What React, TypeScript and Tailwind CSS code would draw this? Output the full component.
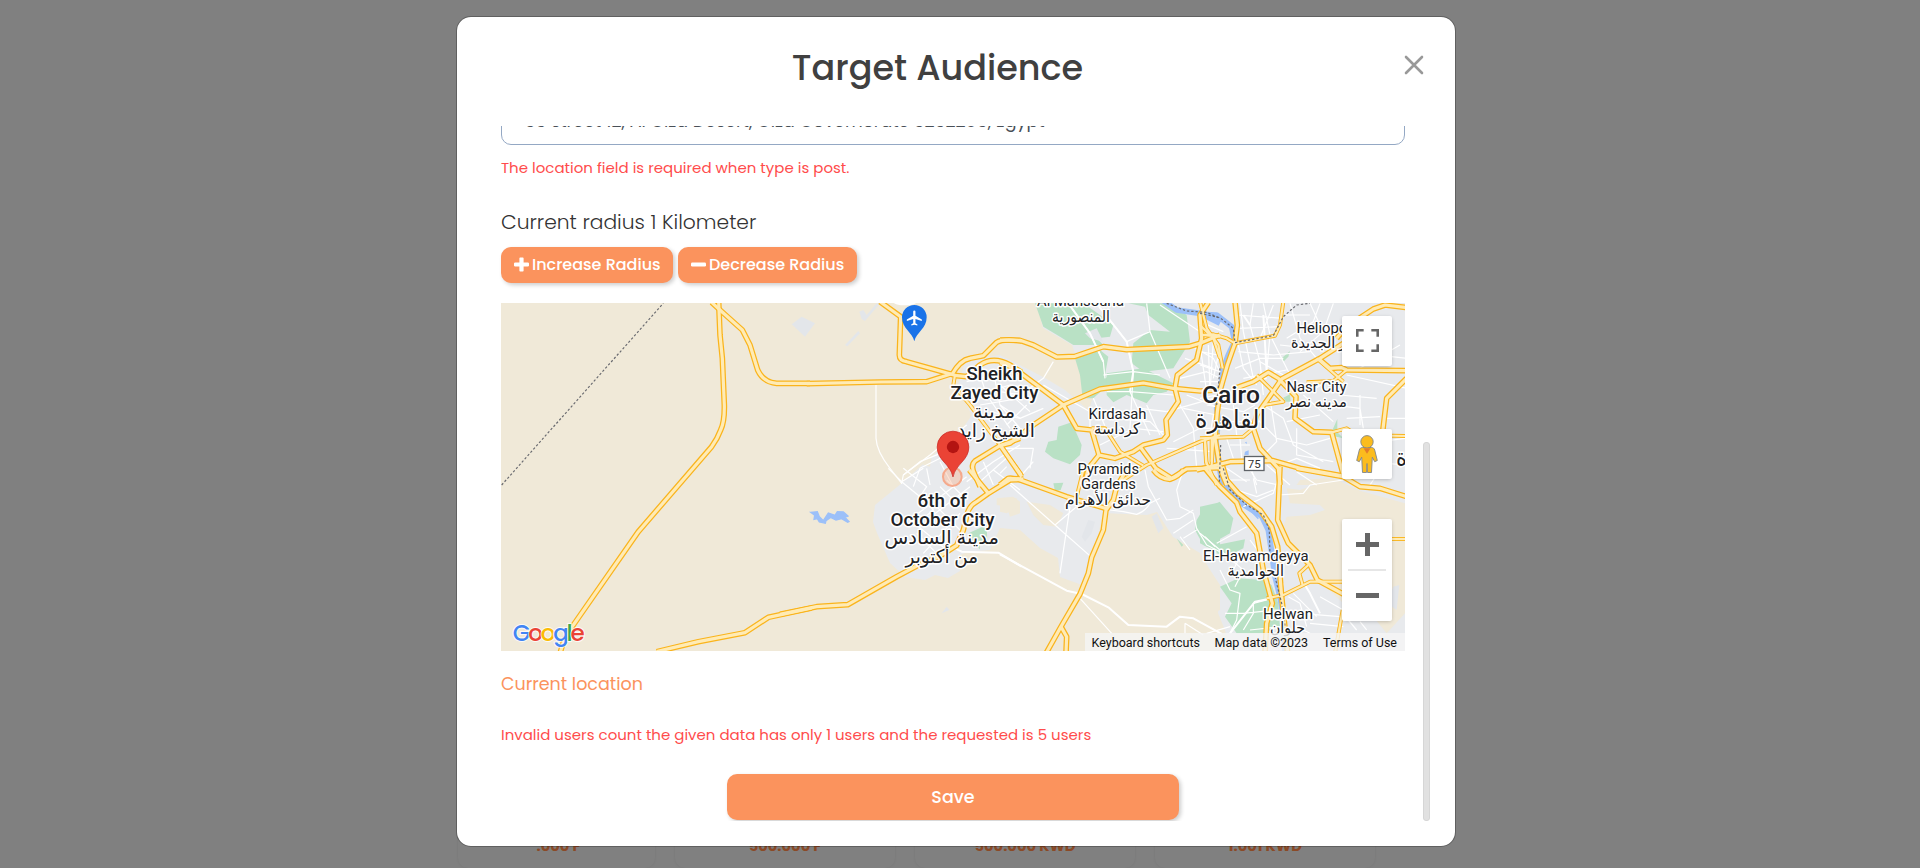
import React from "react";

/* Map geometry is authored per tile, three drawing units to one pixel. */
type Tile = "W" | "A" | "B" | "C" | "D" | "E" | "F";
type Shape = [Tile, string];

const ORIGIN: Record<Tile, string> = {
  W: "translate(490 295) scale(.33333)",
  A: "translate(780 295) scale(.33333)",
  B: "translate(1000 295) scale(.33333)",
  C: "translate(1200 295) scale(.33333)",
  D: "translate(780 470) scale(.33333)",
  E: "translate(1000 470) scale(.33333)",
  F: "translate(1200 470) scale(.33333)",
};

const SAND: Shape[] = [
  ["F", "M260 55 300 60 400 25 480 62 615 100 615 430 560 490 520 440 430 400 345 320 330 285 275 235 250 170 260 140 330 135 375 120 360 105 270 100Z"],
  ["F", "M0 285 30 300 60 345 60 420 40 430 0 425Z"],
  ["B", "M180 260 220 265 275 310 270 335 230 300Z"],
  ["A", "M430 490 455 490 450 515 430 510Z"],
  ["D", "M650 85 700 80 720 95 720 130 690 140 680 110 650 105Z"],
  ["E", "M0 90 50 85 55 110 20 130 0 125Z"],
  ["E", "M80 95 150 105 190 130 170 170 130 165 100 135Z"],
  ["C", "M300 555 380 550 425 560 425 570 290 570Z"],
];

const PARKS: Shape[] = [
  ["B", "M105 25 250 25 300 60 340 90 330 125 290 130 310 150 220 150 180 125 130 95Z"],
  ["B", "M385 25 505 25 560 60 570 140 520 220 430 230 395 205 400 145 450 105 510 110 445 60 435 35Z"],
  ["B", "M225 190 300 165 325 185 315 240 330 265 280 310 248 310 240 240Z"],
  ["B", "M320 235 430 220 520 265 500 290 460 300 440 325 380 300 340 322 320 300Z"],
  ["B", "M175 395 215 382 245 450 240 480 210 508 160 490 135 470 145 440 170 435Z"],
  ["E", "M160 40 190 38 182 60 165 64Z"],
  ["E", "M605 125 660 95 660 250 610 225 585 180 590 150Z"],
  ["F", "M0 110 60 97 100 145 90 190 45 215 20 230 0 220Z"],
  ["F", "M50 225 135 208 130 235 80 260 50 250Z"],
  ["F", "M60 350 115 325 190 330 215 345 235 400 240 470 190 490 110 490 75 440 95 400Z"],
  ["D", "M565 190 620 165 622 215 600 225 600 238 570 215Z"],
  ["C", "M245 190 270 168 265 185 250 200Z"],
  ["C", "M395 410 412 372 412 412 430 430 395 422Z"],
  ["C", "M250 308 270 298 272 320 258 320Z"],
  ["E", "M530 205 550 225 545 230Z"],
];

const GREY: Shape[] = [
  ["A", "M35 88 65 65 105 85 75 125Z"],
  ["A", "M238 50 250 45 260 60 290 25 300 25 255 78 245 72Z"],
  ["A", "M195 150 235 108 240 115 202 154Z"],
  ["B", "M255 115 290 100 310 140 270 130Z"],
  ["D", "M485 430 500 410 508 420Z"],
  ["E", "M245 200 265 150 285 155 275 190 255 215Z"],
  ["E", "M455 140 470 130 490 175 475 190Z"],
  ["F", "M580 350 598 345 590 420 560 400Z"],
];

const RIVER: Shape[] = [
  ["B", "M480 10 530 45 600 55 660 85"],
  ["C", "M0 58 50 60 95 95 104 140 85 180 70 220 62 290 50 340 55 380 48 440 55 500 68 570"],
  ["F", "M60 -10 85 60 125 100 185 138 205 180 214 240 225 320 240 380 252 450 255 543"],
];

const HIGHWAYS: Shape[] = [
  ["W", "M665 22 690 45 757 105 780 150 803 225Q820 262 860 265L960 265"],
  ["A", "M80 266 300 261 440 260 515 236"],
  ["W", "M686 20 690 120 697 190 703 330Q704 380 692 405 682 432 665 455L445 710 250 990 222 1035 210 1075"],
  ["W", "M500 1070 625 1040 765 1013 835 967 965 939"],
  ["D", "M0 433 110 410 203 404 350 320 410 288 480 258 530 226 550 180 562 130Q570 105 590 95L625 70 690 30 725 28"],
  ["A", "M300 20 362 65 358 180Q358 197 380 200L450 220 530 242 560 245"],
  ["A", "M515 240Q540 195 570 190L610 182 650 142Q670 130 725 138"],
  ["A", "M560 245 600 210Q640 182 690 210L725 232"],
  ["B", "M0 135 60 136 100 150 170 186 225 184 310 155 380 164 565 155 600 145 660 120"],
  ["B", "M0 203 40 218 110 270 190 330 230 400 275 405 297 480 345 490 400 470 430 450 490 435 502 420 498 375 535 320 525 280 532 240 590 195 605 130 600 60 625 22"],
  ["B", "M190 330 300 282 430 264 520 280 600 288 660 285"],
  ["B", "M190 330 100 390 30 445 0 452"],
  ["A", "M720 430 660 452 585 498Q570 512 585 540L600 575"],
  ["D", "M568 0 625 70"],
  ["B", "M297 480 265 520 255 560"],
  ["B", "M420 455 468 520 515 550 560 522 665 518"],
  ["C", "M-10 525 90 500 220 497 300 520 430 543"],
  ["E", "M460 0Q480 27 510 28 535 20 550 0"],
  ["E", "M380 0 350 50 340 90 318 120 310 180 275 262 265 310 240 372 183 470 138 550"],
  ["E", "M183 470 200 500 198 550"],
  ["E", "M0 45 30 25 55 28 200 80 320 116"],
  ["B", "M0 450 65 545M0 570 25 550 70 552"],
  ["F", "M15 -5 60 50 110 98 120 125 170 190 190 300 217 400 200 460 195 550"],
  ["F", "M240 -10 233 150 265 220 330 285 352 330 435 375"],
  ["F", "M68 -10 80 30 115 70 180 120 215 170 233 230 245 380 263 550"],
  ["F", "M290 -5 430 20 480 50 540 55 620 80"],
  ["C", "M105 20 112 90 105 145 82 210 62 280 52 350 45 430 60 520 80 570"],
  ["C", "M430 145 360 190 245 252 205 310 170 360 160 400"],
  ["C", "M355 190 390 220 425 218 440 225 620 227"],
  ["C", "M410 130 440 95 520 42 555 30 620 38"],
  ["C", "M620 250 560 310 548 410"],
  ["C", "M110 278 160 260 205 232 235 250 288 305 285 370 340 410 395 412 430 540"],
  ["C", "M160 400 180 460 235 520 240 570"],
];

const ARTERIALS: Shape[] = [
  ["C", "M250 20 240 90 225 122 105 145"],
  ["C", "M0 20 20 100 55 150 68 220"],
  ["C", "M0 120 40 118 80 130 105 145"],
  ["C", "M0 430 130 425 160 400"],
  ["C", "M15 430 18 500 50 570M35 430 35 500"],
  ["C", "M440 225 400 258 320 262"],
  ["C", "M395 412 440 400 470 420 620 423"],
  ["C", "M170 240 250 320 190 330"],
  ["C", "M350 190 430 260"],
  ["B", "M275 400 315 400 360 470 430 512"],
  ["B", "M345 570 440 510 600 440 660 420"],
  ["B", "M605 120 660 125M600 90 640 130 660 190M615 440 620 510M640 430 635 510"],
  ["A", "M525 240 520 270 570 330 660 450 725 540"],
  ["F", "M200 385 250 375 330 335 435 335"],
  ["F", "M325 285 298 310 308 345"],
  ["F", "M570 207 620 207"],
  ["F", "M428 420 405 550"],
  ["E", "M250 0 230 80"],
];

const STREETS: Shape[] = [
  ["A", "M288 270 288 430Q290 470 330 520L365 565 370 540 450 480 560 390"],
  ["A", "M370 540 420 500 570 440M400 575 420 520 500 480M560 560 640 500 720 450M450 570 440 520M600 560 690 480M610 500 640 570M520 575 480 500"],
  ["A", "M560 260 640 240 720 250M590 300 690 270 720 275M600 330 720 310M630 350 720 370M640 230 660 330 720 400M600 240 620 300 690 400"],
  ["B", "M0 290 60 300 130 250 160 200M0 330 60 370 130 340M20 390 80 330M0 270 90 350M130 270 270 350 270 400"],
  ["B", "M205 25 270 115 310 200 315 250M290 25 380 140 400 230 390 400M380 140 450 110 440 25M450 110 510 250M480 30 600 110"],
  ["B", "M310 240 400 230 480 240M320 290 390 290 520 300M280 310 330 430M390 290 450 420M440 330 480 420"],
  ["B", "M340 370 450 380 500 430M400 400 490 410M420 340 500 350M540 330 580 400 590 520M520 440 600 400 660 400"],
  ["B", "M540 250 620 230 660 250M555 190 640 220M570 150 640 190 660 230M560 300 660 340M550 340 650 360M600 150 620 290M640 140 630 290"],
  ["B", "M300 450 420 390M500 350 640 310M500 460 640 470M0 460 100 460 90 520M65 540 100 500"],
  ["C", "M120 25 130 110 160 250M160 25 150 90 180 200 250 240M190 25 210 120 200 230M220 30 180 130M110 60 250 70M115 100 240 95"],
  ["C", "M270 25 300 130 350 190M330 25 360 90 420 130M360 25 340 80 260 130M400 25 370 110 300 170M250 60 330 60M240 150 330 160"],
  ["C", "M115 170 220 180 330 170M105 220 180 190 250 190M130 250 260 225M115 150 130 220 170 270M180 200 190 300M215 130 270 240"],
  ["C", "M0 80 70 110M0 170 55 180 40 250M0 210 60 230M0 260 55 260M20 120 0 170M25 150 30 290M0 310 50 300"],
  ["C", "M190 330 250 370 280 450 370 500M170 370 230 430 320 450 390 430M210 310 230 440 190 480M260 380 360 360M290 400 290 480 400 500"],
  ["C", "M400 330 480 340 490 400M420 300 530 310M440 370 540 365M480 300 480 390M560 370 615 370M540 440 615 430M310 300 400 380M330 290 380 260"],
  ["C", "M80 430 100 490M90 450 150 450M120 430 125 490M60 380 180 380M100 330 110 420M80 520 140 560M150 510 170 570M200 510 270 570"],
  ["C", "M20 330 130 350 165 330M40 360 30 420M290 530 350 570M240 510 290 490 360 520M440 240 620 280M470 225 600 150M440 170 620 190"],
  ["D", "M325 -5 365 35 420 80 440 50 370 -5M365 35 430 -5M415 130 560 20M380 140 500 240M440 150 570 50M460 100 540 180M400 170 460 120 420 80M430 250 540 130M500 30 560 90"],
  ["D", "M410 190 470 250M480 50 530 100M640 0 720 60M660 10 680 -10"],
  ["E", "M30 45 165 165 275 262M165 165 230 110M210 110 180 310M330 120 370 125 410 133Q435 125 450 100L480 85M240 385 335 490M555 460 555 490M555 460 610 495"],
  ["E", "M435 0 445 50 500 150 540 145 580 120M550 0 530 60 540 110 580 130 590 175 620 225 660 245M520 190 580 150M540 200 570 240M550 205 590 180"],
  ["F", "M0 190 60 240 130 300 105 350M130 110 220 70 235 20M110 60 170 80 220 60M160 25 170 70M90 30 150 30M235 75 310 70 330 45 430 30M150 0 170 30 235 45"],
  ["F", "M50 220 140 170M15 200 45 230M60 300 90 360 120 370 110 450 90 490M130 480 160 430 160 400 200 390M75 430 130 430 230 420M100 300 130 240M240 400 290 470 330 490"],
  ["F", "M250 340 240 380M265 380 300 400 320 470M280 370 350 440M300 430 420 440M330 460 430 470M360 380 430 420M445 450 470 480M480 455 500 480M150 210 180 250M270 250 230 310"],
  ["F", "M430 0 560 -20 615 -15M500 60 540 0M150 480 240 470M20 490 90 470"],
];

const MAIN_STREETS: Shape[] = [
  ["D", "M525 235 545 245 655 248 725 290"],
  ["E", "M0 253 200 362 245 372 325 412 385 465 500 470 540 440 580 445 665 492"],
  ["B", "M205 25 270 115 310 200M290 25 380 140 400 230 390 290"],
  ["F", "M300 320 330 370 360 430M90 490 165 395 215 385"],
  ["C", "M150 90 130 60M160 250 200 250M190 60 200 230"],
];

const DASHES: Shape[] = [
  ["W", "M35 570 520 25"],
  ["B", "M500 25 560 48 620 52 660 70"],
  ["C", "M0 55 60 68 100 100 105 143 220 122 250 65 290 30 330 25"],
  ["C", "M60 220 50 330M62 450 58 560"],
  ["F", "M70 -5 90 60 140 105 190 135 208 180 210 260M225 320 245 400 260 500"],
];

const draw = (list: Shape[]) =>
  list.map(([tile, d], i) => <path key={i} d={d} transform={ORIGIN[tile]} />);

type Label = [string, number, number, number, number, number?];
/* text, left, right, baseline, size, weight */
const LABELS: Label[] = [
  ["Al Mansouria", 1037, 1124, 306, 15],
  ["المنصورية", 1052, 1110, 321.5, 15.5],
  ["Sheikh", 966.5, 1022.5, 380, 18, 500],
  ["Zayed City", 950.5, 1038.5, 399, 18, 500],
  ["مدينة", 973, 1015, 417.5, 19],
  ["الشيخ زايد", 957, 1035, 436.5, 19],
  ["Kirdasah", 1088.5, 1146.5, 419, 15],
  ["كرداسة", 1094, 1140, 433.5, 15.5],
  ["Pyramids", 1077.5, 1139, 474, 15],
  ["Gardens", 1081, 1136, 489, 15],
  ["حدائق الأهرام", 1065, 1151, 504.5, 15.5],
  ["Heliopolis", 1296.5, 1362, 333, 15],
  ["مصر الجديدة", 1291, 1367, 348, 15.5],
  ["Nasr City", 1286.5, 1346.5, 392, 15],
  ["مدينه نصر", 1286, 1347, 406.5, 15.5],
  ["Cairo", 1202, 1260, 403, 24, 500],
  ["القاهرة", 1195, 1266, 427.5, 25],
  ["6th of", 917.5, 967, 506.5, 18, 500],
  ["October City", 890.5, 994.5, 525.5, 18, 500],
  ["مدينة السادس", 884.5, 999, 544, 19],
  ["من أكتوبر", 905.5, 978, 563, 19],
  ["El-Hawamdeyya", 1203, 1308.5, 561, 15],
  ["الحوامدية", 1227.5, 1284, 575.5, 15.5],
  ["Helwan", 1263, 1313, 619, 15],
  ["حلوان", 1270, 1305, 633, 15.5],
  ["ة", 1396, 1407, 466, 24, 500],
];

function MapCanvas() {
  return (
    <svg
      viewBox="501 303 904 348"
      className="block h-[348px] w-[904px] bg-[#f0e9d8]"
      fontFamily='Roboto, "DejaVu Sans", sans-serif'
    >
      <path
        fill="#e8eaed"
        d="M902 483 875 505 873 522 877 533 890 563 905 577 925 580 935 575 948 578 960 571 958 556 967 552 990 550 1000 528 1020 530 1040 548 1058 558 1060 577 1082 585 1098 535 1103 513 1147 515 1157 512 1173 537 1200 553 1213 575 1220 590 1218 613 1225 630 1230 651 1405 651 1405 303 1037 303 1043 328 1072 345 1080 368 1093 398 1088 410 1065 390 1045 378 1020 365 1000 355 987 357 965 363 957 388 972 415 960 432 930 458Z"
      />
      <g fill="#f0e9d8">{draw(SAND)}</g>
      <g fill="#b9e1c5">{draw(PARKS)}</g>
      <g fill="#e3e6ea">{draw(GREY)}</g>
      <path
        transform={ORIGIN.D}
        fill="#9cc0f9"
        stroke="#9cc0f9"
        strokeWidth="4"
        d="M92 127 112 125 118 140 130 152 145 129 165 136 172 125 190 126 204 138 195 142 207 155 203 157 185 146 168 150 152 142 138 152 136 160 118 156 112 146 102 148 104 136Z"
      />
      <path transform={ORIGIN.C} fill="#9cc0f9" d="M135 470 146 466 146 480 133 480Z M135 442 140 440 140 448Z" />
      <g fill="none" strokeLinejoin="round">
        <g stroke="#9cc0f9" strokeWidth="17">{draw(RIVER)}</g>
        <path transform={ORIGIN.F} stroke="#9cc0f9" strokeWidth="4" d="M120 95 150 120 175 146" />
        <g stroke="#fff" strokeWidth="3.6">{draw(STREETS)}</g>
        <g stroke="#fff" strokeWidth="6">{draw(MAIN_STREETS)}</g>
        <g stroke="#fab41c" strokeWidth="12">{draw(ARTERIALS)}</g>
        <g stroke="#fab41c" strokeWidth="17">{draw(HIGHWAYS)}</g>
        <g stroke="#ffebb5" strokeWidth="6.5">{draw(ARTERIALS)}</g>
        <g stroke="#ffebb5" strokeWidth="9.5">{draw(HIGHWAYS)}</g>
        <g stroke="#6a6b70" strokeWidth="3.6" strokeDasharray="7 6">{draw(DASHES)}</g>
      </g>

      <g transform={ORIGIN.A}>
        <ellipse cx="375" cy="22" rx="34" ry="9" fill="#fff" />
        <path
          d="M403 139C397 112 366 101 366 67a37 37 0 0 1 74 0C440 101 409 112 403 139Z"
          fill="#1a73e8"
        />
        <path
          transform="translate(376 42) scale(2.25)"
          fill="#fff"
          d="M22 16v-2l-8.500-5V3.500a1.500 1.500 0 0 0-3 0V9L2 14v2l8.500-2.500V19L8 20.500V22l4-1 4 1v-1.500L13.500 19v-5.500z"
        />
      </g>

      <rect x="1244.500" y="456.500" width="19.500" height="14" fill="#fff" stroke="#5f6368" strokeWidth="1.300" />
      <text x="1254.300" y="468" fontSize="11.500" fill="#333" textAnchor="middle">75</text>

      <g fill="#202124" stroke="#fff" strokeWidth="3" strokeLinejoin="round" paintOrder="stroke">
        {LABELS.map(([text, left, right, y, size, weight]) => (
          <text
            key={text}
            x={(left + right) / 2}
            y={y}
            fontSize={size}
            fontWeight={weight ?? 400}
            textAnchor="middle"
            textLength={right - left}
            lengthAdjust="spacingAndGlyphs"
          >
            {text}
          </text>
        ))}
      </g>

      <g transform={ORIGIN.A}>
        <circle cx="517" cy="545" r="28" fill="#fb935d" fillOpacity=".28" stroke="#f5a98c" strokeWidth="6" />
        <path
          d="M519 546C510 505 471.500 497 471.500 456a47.500 47.500 0 0 1 95 0C566.500 497 528 505 519 546Z"
          fill="#ea4335"
          stroke="#c5221f"
          strokeWidth="2"
        />
        <circle cx="519" cy="456" r="18.500" fill="#b31412" />
      </g>

      <text
        x="512.800"
        y="640.800"
        fontSize="23"
        fontWeight="500"
        letterSpacing="-2.250"
        fontFamily="Poppins, Lato, sans-serif"
        stroke="#fff"
        strokeWidth="2"
        strokeOpacity=".8"
        paintOrder="stroke"
      >
        <tspan fill="#4285f4">G</tspan>
        <tspan fill="#ea4335">o</tspan>
        <tspan fill="#fbbc04">o</tspan>
        <tspan fill="#4285f4">g</tspan>
        <tspan fill="#34a853">l</tspan>
        <tspan fill="#ea4335">e</tspan>
      </text>
    </svg>
  );
}

const CONTROL = "flex items-center justify-center rounded-[2px] bg-white shadow-[0_1px_4px_-1px_rgba(0,0,0,0.3)]";

function MapControls() {
  return (
    <>
      <button className={`absolute right-[13px] top-[13px] h-[50px] w-[50px] ${CONTROL}`}>
        <svg viewBox="0 0 18 18" className="mb-px h-[23px] w-[23px]" fill="#666">
          <path d="M0 0v6h2V2h4V0H0zm16 0h-4v2h4v4h2V0h-2zm0 16h-4v2h6v-6h-2v4zM2 12H0v6h6v-2H2v-4z" />
        </svg>
      </button>
      <button className={`absolute right-[13px] top-[126px] h-[50px] w-[50px] ${CONTROL}`}>
        <svg viewBox="0 0 22 38" className="h-[38px] w-[22px]" stroke="#80868b" strokeWidth=".9" strokeLinejoin="round">
          <path
            fill="#fbbc1e"
            d="M6.500 12.500h9c1.700 0 2.800 1 3.200 2.500l2.600 10.500-2.600 1.200-2.400-4.500-.8 15.300h-4l-.5-9-.5 9h-4l-.8-15.300-2.400 4.500L.7 25.500 3.300 15c.4-1.500 1.500-2.500 3.200-2.500z"
          />
          <circle cx="11" cy="6.800" r="6.200" fill="#fbbc1e" />
          <path stroke="none" fill="#e37d2b" d="M7.500 13.200h7L11 18.800z" />
        </svg>
      </button>
      <div className="absolute right-[13px] top-[216px] flex h-[102px] w-[50px] flex-col items-center rounded-[2px] bg-white shadow-[0_1px_4px_-1px_rgba(0,0,0,0.3)]">
        <button className="flex h-[50px] items-center">
          <svg viewBox="0 0 23 23" className="h-[23px] w-[23px]" fill="#666">
            <path d="M9 0h5v9h9v5h-9v9H9v-9H0V9h9z" />
          </svg>
        </button>
        <div className="h-[2px] w-[38px] bg-[#e6e6e6]" />
        <button className="flex h-[49px] items-center">
          <svg viewBox="0 0 23 5" className="h-[5px] w-[23px]" fill="#666">
            <path d="M0 0h23v5H0z" />
          </svg>
        </button>
      </div>
      <div className="absolute bottom-0 right-0 flex h-[18px] w-[320px] items-center whitespace-nowrap bg-[#f5f5f5]/80 pl-[6.5px] pt-px font-['Roboto',sans-serif] text-[12.5px] leading-[17px] text-[#111]">
        <span className="w-[123px]">Keyboard shortcuts</span>
        <span className="w-[108.5px]">Map data ©2023</span>
        <span>Terms of Use</span>
      </div>
    </>
  );
}

const BUTTON =
  "flex items-center bg-[#fb935d] font-medium text-white shadow-[2px_2px_4px_rgba(0,0,0,0.2)]";

export default function App() {
  return (
    <div className="relative h-[868px] w-full overflow-hidden bg-[#808080] font-['Poppins','Inter',sans-serif]">
      <div className="flex h-full items-end gap-5 pl-[458px] text-[14.7px] font-bold text-[#8b4a27]">
        {[
          [".000 F", "w-[197px] pl-1"],
          ["500.000 F", "w-[220px]"],
          ["500.000 KWD", "w-[220px]"],
          ["1.001 KWD", "w-[220px]"],
        ].map(([price, size]) => (
          <div
            key={price}
            className={`flex h-[50px] items-end justify-center rounded-b-[10px] pb-[12px] leading-5 shadow-[0_0_3px_rgba(0,0,0,0.08)] ${size}`}
          >
            {price}
          </div>
        ))}
      </div>

      <div className="absolute inset-0 flex items-start justify-center pr-2 pt-4">
        <div className="flex h-[831px] w-[1000px] flex-col rounded-[15px] border border-black/25 bg-white bg-clip-padding pb-[25px]">
          <header className="flex h-[109px] shrink-0 items-start gap-[26px] pl-[44px] pr-[27px]">
            <h1 className="mt-[31px] flex-1 text-center text-[35px] font-medium leading-[40px] text-[#404040]">
              Target Audience
            </h1>
            <button className="mt-[34px] flex h-7 w-7 items-center justify-center">
              <svg viewBox="0 0 20 20" className="h-5 w-5" stroke="#999" strokeWidth="2.600" strokeLinecap="round">
                <path d="M2 2 18 18M18 2 2 18" />
              </svg>
            </button>
          </header>

          <div className="flex h-[695px] overflow-hidden pl-[44px]">
            <div className="flex w-[904px] shrink-0 flex-col">
              <div className="-mt-[41px] h-[60px] shrink-0 rounded-[10px] border border-[#94a8c4] pl-[23px] pt-[23px] text-[17.5px] leading-6 text-[#495057]">
                36 street 12, Al Giza Desert, Giza Governorate 3252206, Egypt
              </div>
              <p className="mt-[11px] text-[15px] leading-6 text-[#ff4c4c]">
                The location field is required when type is post.
              </p>
              <p className="mt-[27px] text-[20.3px] font-light leading-[30px] text-[#333]">
                Current radius 1 Kilometer
              </p>
              <div className="mt-[10px] flex gap-[5px] text-[16px]">
                <button className={`h-9 w-[172px] gap-[3px] rounded-[10px] pl-[13px] ${BUTTON}`}>
                  <svg viewBox="0 0 15 15" className="mb-[2px] h-[15px] w-[15px]" fill="currentColor">
                    <path d="M6.200.5h2.600q.8 0 .8.8v4.100h4.100q1.300 0 1.300 1v2.200q0 1-1.300 1H9.600v4.100q0 .8-.8.8H6.200q-.8 0-.8-.8V9.600H1.300Q0 9.600 0 8.600V6.400q0-1 1.300-1h4.100V1.300q0-.8.800-.8z" />
                  </svg>
                  Increase Radius
                </button>
                <button className={`h-9 w-[179px] gap-[3px] rounded-[10px] pl-[13px] ${BUTTON}`}>
                  <svg viewBox="0 0 15 15" className="mb-[2px] h-[15px] w-[15px]" fill="currentColor">
                    <rect y="5.500" width="15" height="4" rx="1.200" />
                  </svg>
                  Decrease Radius
                </button>
              </div>
              <div className="relative mt-5 h-[348px] shrink-0 overflow-hidden">
                <MapCanvas />
                <MapControls />
              </div>
              <a className="mt-5 text-[17.5px] leading-[26px] text-[#fb935d]">Current location</a>
              <p className="mt-[26px] text-[15px] leading-6 text-[#ff4c4c]">
                Invalid users count the given data has only 1 users and the requested is 5 users
              </p>
              <button
                className={`mt-[27px] h-[46px] w-[452px] shrink-0 justify-center self-center rounded-[10px] pt-px text-[17.5px] ${BUTTON}`}
              >
                Save
              </button>
            </div>
            <div className="ml-[18px] mt-[316px] h-[379px] w-[7px] rounded-[3px] border border-[#d6d6d6] bg-[#e1e1e1]" />
          </div>
        </div>
      </div>
    </div>
  );
}
